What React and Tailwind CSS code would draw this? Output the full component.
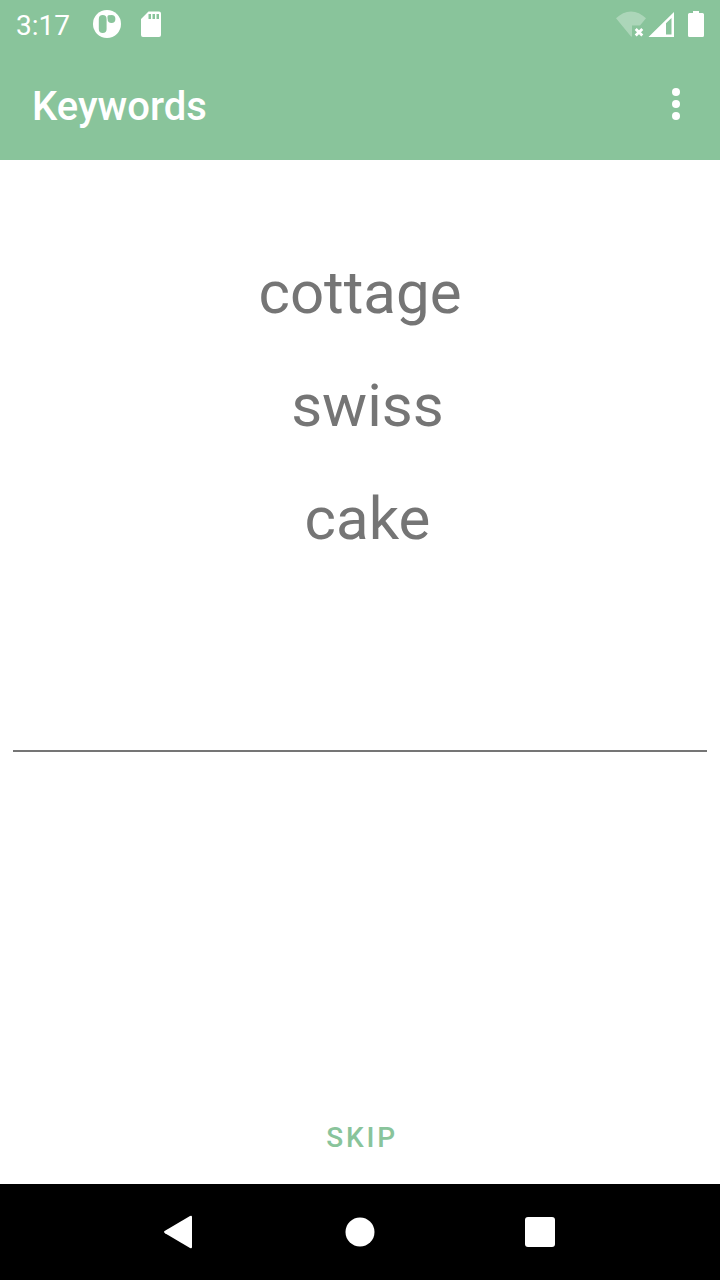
const words = ['cottage', ' swiss', ' cake'];

function StatusBar() {
  return (
    <div className="flex h-12 items-center justify-between pr-4 pl-4">
      <div className="flex items-center">
        <span className="w-[77px] pt-1 text-[28px] leading-8">3:17</span>
        <svg className="h-7 w-7" viewBox="0 0 28 28" aria-hidden="true">
          <circle cx="14" cy="14" r="14" fill="#fff" />
          <rect x="5.800" y="5" width="7.800" height="18" rx="3.900" fill="#89c49b" />
          <circle cx="18.500" cy="9" r="3.900" fill="#89c49b" />
          <rect x="14.600" y="5.200" width="3" height="3.800" rx="1" fill="#89c49b" />
        </svg>
        <svg className="ml-5 h-[26px] w-5" viewBox="0 0 20 26" aria-hidden="true">
          <path
            fill="#fff"
            fillRule="evenodd"
            d="M7.500 0.500H18a2 2 0 0 1 2 2V24a2 2 0 0 1-2 2H2a2 2 0 0 1-2-2V8zM7.500 3v5h2.500V3zM11.500 3v5h2.500V3zM15.500 3v5h2.500V3z"
          />
        </svg>
      </div>
      <svg className="h-8 w-[88px]" viewBox="616 8 88 32" aria-hidden="true">
        <path
          fill="#fff"
          fillOpacity="0.3"
          d="M616 18.300C620.500 14 625.500 11.500 631 11.500S641.500 14 646 18.300L640 25.500H632V36.500H631z"
        />
        <path d="M635.700 29l6.600 6.600M642.300 29l-6.600 6.600" stroke="#fff" strokeWidth="2.800" />
        <path
          fill="#fff"
          fillRule="evenodd"
          d="M674 12V37H648.500zM671.500 18L666 23.300V34.500H671.500z"
        />
        <path
          fill="#fff"
          d="M693 11h6v2h3.500a1.500 1.500 0 0 1 1.500 1.500V35.500a1.500 1.500 0 0 1-1.500 1.500H689.500a1.500 1.500 0 0 1-1.500-1.500V14.500a1.500 1.500 0 0 1 1.500-1.500H693z"
        />
      </svg>
    </div>
  );
}

function NavigationBar() {
  return (
    <nav className="flex h-24 items-center justify-center bg-black">
      <button type="button" aria-label="Back" className="flex w-1/4 justify-center">
        <svg className="h-9 w-9" viewBox="0 0 36 36" aria-hidden="true">
          <path
            fill="#fff"
            d="M28 2q2-1 2 1V33q0 2-2 1L3 19.200Q1 18 3 16.800z"
          />
        </svg>
      </button>
      <button type="button" aria-label="Home" className="flex w-1/4 justify-center">
        <svg className="h-8 w-8" viewBox="0 0 32 32" aria-hidden="true">
          <circle cx="16" cy="16" r="14.500" fill="#fff" />
        </svg>
      </button>
      <button type="button" aria-label="Recent apps" className="flex w-1/4 justify-center">
        <svg className="h-[30px] w-[30px]" viewBox="0 0 30 30" aria-hidden="true">
          <rect width="30" height="30" rx="3" fill="#fff" />
        </svg>
      </button>
    </nav>
  );
}

export default function App() {
  return (
    <div className="flex min-h-screen flex-col bg-white font-['Roboto',sans-serif]">
      <header className="bg-[#89c49b] text-white">
        <StatusBar />
        <div className="flex h-28 items-center justify-between pr-5 pl-8">
          <h1 className="pt-1.5 text-[40px] leading-12 font-medium">Keywords</h1>
          <button type="button" aria-label="More options" className="flex h-12 w-12 items-center justify-center">
            <svg className="h-8 w-2" viewBox="0 0 8 32" fill="#fff" aria-hidden="true">
              <circle cx="4" cy="4" r="4" />
              <circle cx="4" cy="16" r="4" />
              <circle cx="4" cy="28" r="4" />
            </svg>
          </button>
        </div>
      </header>
      <main className="flex flex-1 flex-col">
        <div className="pt-19 text-center text-[60px] leading-[113px] text-[#757575]">
          {words.map((word) => (
            <p key={word} className="whitespace-pre">{word}</p>
          ))}
        </div>
        <div className="px-[13px] pt-[87px]">
          <input
            type="text"
            aria-label="Your answer"
            className="block h-[90px] w-full border-b-2 border-[#757575] bg-transparent text-4xl text-[#212121] outline-none"
          />
        </div>
        <button
          type="button"
          className="mt-auto h-24 w-full pt-1 pl-1 text-[28px] leading-8 font-medium tracking-widest text-[#89c49b]"
        >
          SKIP
        </button>
      </main>
      <NavigationBar />
    </div>
  );
}
